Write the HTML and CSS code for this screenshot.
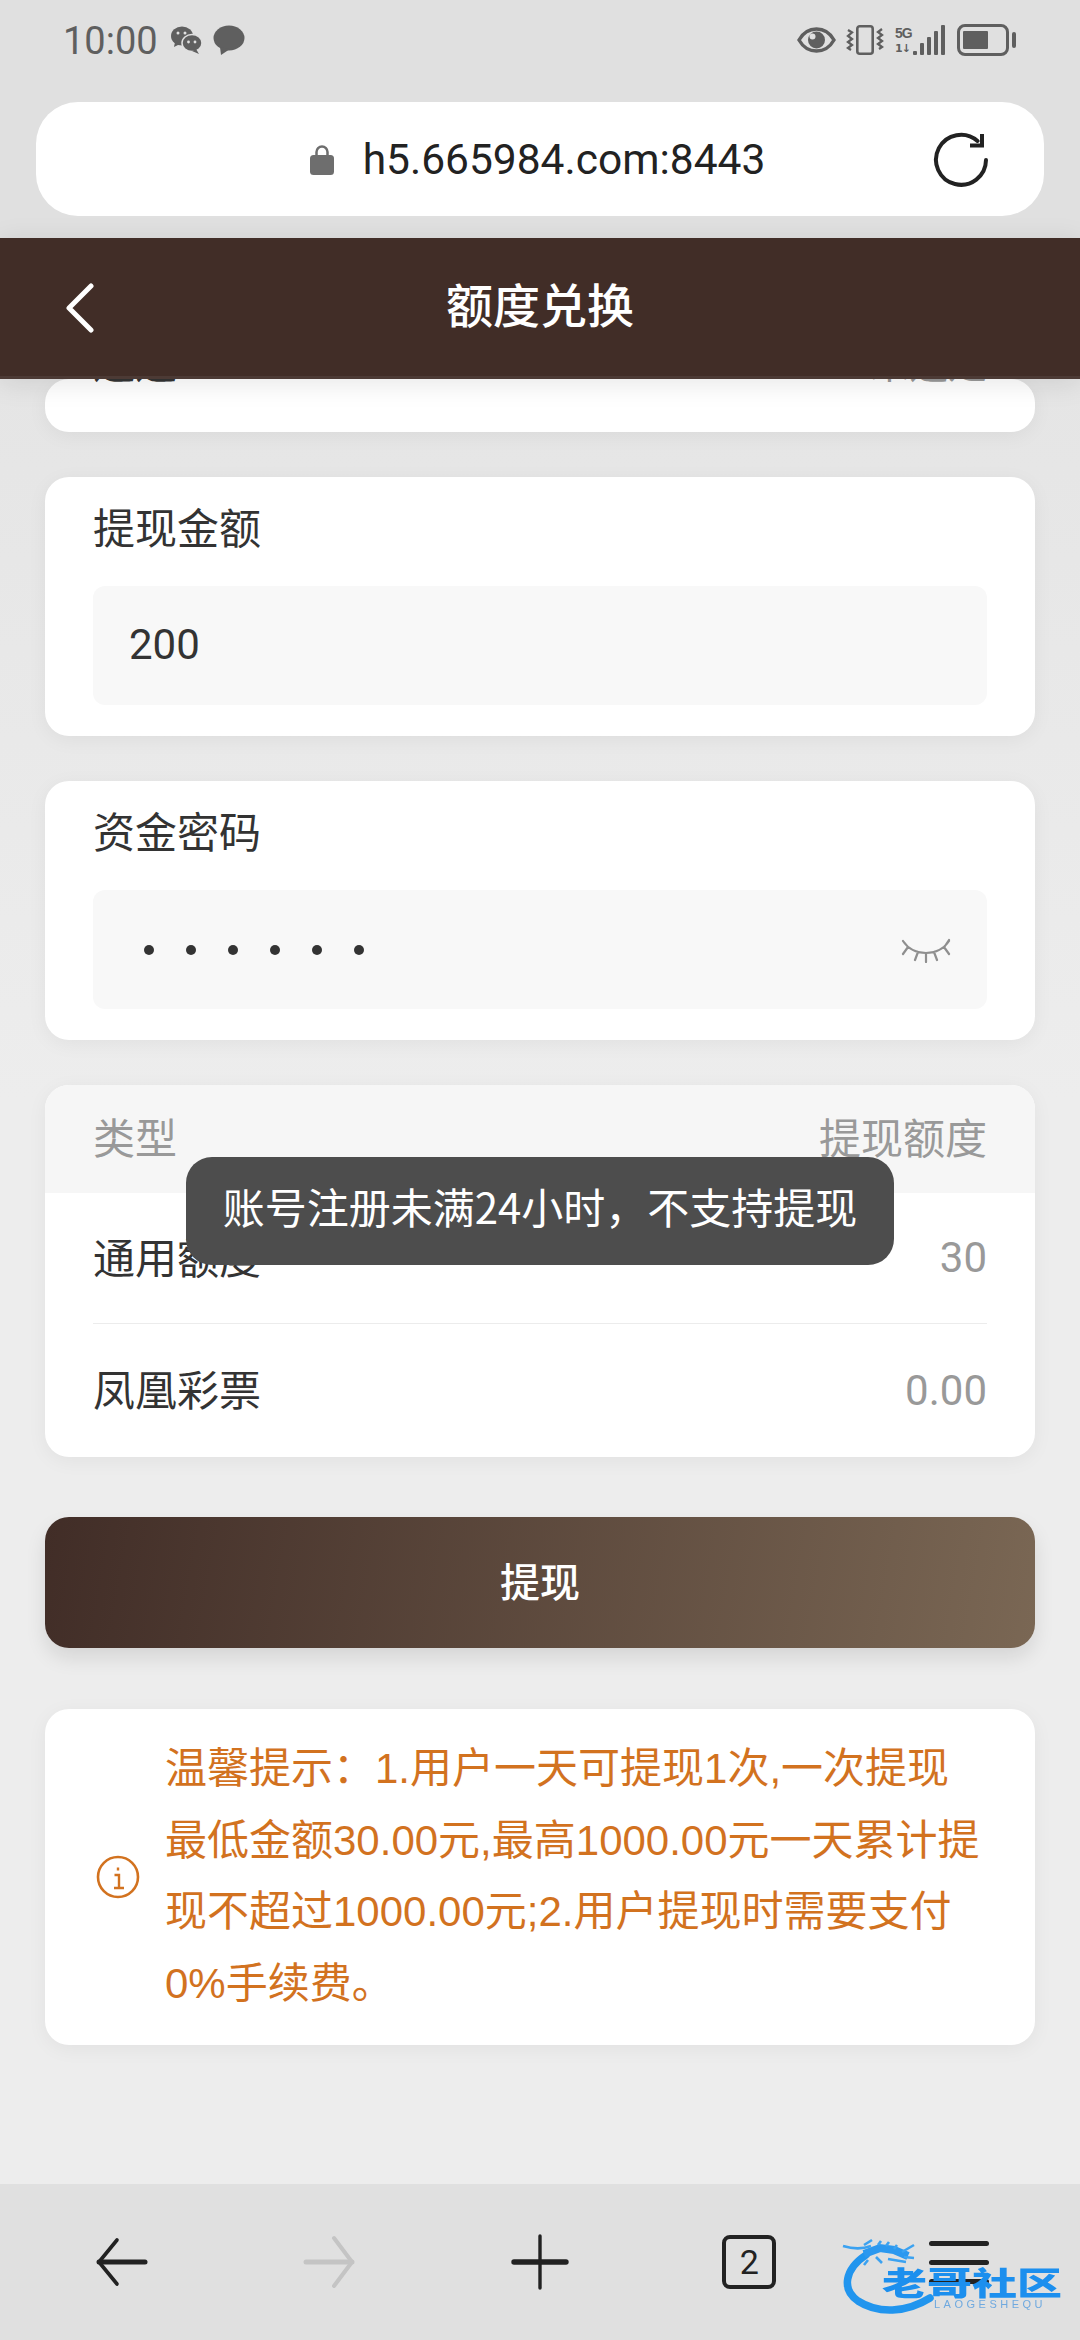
FILE: index.html
```html
<!DOCTYPE html>
<html lang="zh-CN">
<head>
<meta charset="utf-8">
<title>额度兑换</title>
<link rel="stylesheet" href="styles.css">
</head>
<body>
<div class="phone">
  <div class="status">
    <div class="status-left">
      <span class="time">10:00</span>
      <svg class="ic-wechat" viewBox="0 0 32 30"><ellipse cx="12" cy="11" rx="11" ry="9.500" fill="#5f5f5f"/><path d="M5 17l-1 5 6-3z" fill="#5f5f5f"/><ellipse cx="22" cy="18" rx="10" ry="8.500" fill="#5f5f5f" stroke="#e0e0e0" stroke-width="1.500"/><path d="M26 24l3 5-7-3z" fill="#5f5f5f"/><circle cx="8" cy="8" r="1.500" fill="#e0e0e0"/><circle cx="15" cy="8" r="1.500" fill="#e0e0e0"/><circle cx="18.500" cy="17" r="1.400" fill="#e0e0e0"/><circle cx="25" cy="17" r="1.400" fill="#e0e0e0"/></svg>
      <svg class="ic-msg" viewBox="0 0 32 30"><ellipse cx="16" cy="13" rx="15.500" ry="12.500" fill="#5f5f5f"/><path d="M7 22l1 8 9-6z" fill="#5f5f5f"/></svg>
    </div>
    <div class="status-right">
      <svg class="ic-eye" viewBox="0 0 39 26"><path d="M2 13C6.500 5 12.500 2 19.500 2S32.500 5 37 13c-4.500 8-10.500 11-17.500 11S6.500 21 2 13z" fill="none" stroke="#5f5f5f" stroke-width="3.400"/><circle cx="19.500" cy="13" r="8.500" fill="#5f5f5f"/><circle cx="15.500" cy="9.500" r="3" fill="#e0e0e0"/></svg>
      <svg class="ic-vib" viewBox="0 0 38 30"><rect x="11.300" y="1.300" width="15.400" height="27.400" rx="2.500" fill="none" stroke="#5f5f5f" stroke-width="2.600"/><path d="M2 5l4 2.500L2 11l4 3-4 3 4 3-4 3 3 2M36 4l-4 3 4 3-4 3 4 3-4 3 4 3-3 2" fill="none" stroke="#5f5f5f" stroke-width="2.300"/></svg>
      <div class="signal">
        <div class="net"><span class="net-g">5G</span><span class="net-a">1↓</span></div>
        <div class="bars"><i class="b1"></i><i class="b2"></i><i class="b3"></i><i class="b4"></i><i class="b5"></i></div>
      </div>
      <div class="battery"><div class="batt-body"><div class="batt-fill"></div></div><div class="batt-tip"></div></div>
    </div>
  </div>

  <div class="url-wrap">
    <div class="url-bar">
      <svg class="ic-lock" viewBox="0 0 24 31"><path d="M6.500 14V8a5.500 5.500 0 0 1 11 0v6" fill="none" stroke="#6e6e6e" stroke-width="2.500"/><rect x="0" y="11" width="24" height="20" rx="3.500" fill="#6e6e6e"/></svg>
      <span class="url">h5.665984.com:8443</span>
      <svg class="ic-reload" viewBox="0 0 56 56"><path d="M53 28A25 25 0 1 1 44.500 9" fill="none" stroke="#222" stroke-width="4" stroke-linecap="round"/><path d="M37 13.500H49V2" fill="none" stroke="#222" stroke-width="4"/></svg>
    </div>
  </div>

  <header class="app-bar">
    <svg class="ic-back" viewBox="0 0 30 50"><path d="M26 3L4 25l22 22" fill="none" stroke="#fff" stroke-width="5" stroke-linecap="round" stroke-linejoin="round"/></svg>
    <h1 class="title">额度兑换</h1>
  </header>

  <main class="content">
    <section class="card card-clip">
      <div class="clip-row"><span class="label">通道</span><span class="clip-val">未选定</span></div>
    </section>

    <section class="card form-card">
      <div class="label">提现金额</div>
      <div class="input"><span class="input-val">200</span></div>
    </section>

    <section class="card form-card">
      <div class="label">资金密码</div>
      <div class="input input-pass">
        <div class="dots"><i></i><i></i><i></i><i></i><i></i><i></i></div>
        <svg class="ic-eyeclosed" viewBox="0 0 50 26"><path d="M2 4c6 9 13 12 23 12s17-3 23-12M7 10L2 17M17 15l-3 8M25 16v9M33 15l3 8M43 10l5 7M44 9l4-6" fill="none" stroke="#8f8f8f" stroke-width="2.200" stroke-linecap="round"/></svg>
      </div>
    </section>

    <section class="card table-card">
      <div class="t-head"><span>类型</span><span>提现额度</span></div>
      <div class="t-row t-row-line"><span class="t-name">通用额度</span><span class="t-val">30</span></div>
      <div class="t-row t-row-last"><span class="t-name">凤凰彩票</span><span class="t-val">0.00</span></div>
    </section>

    <button class="submit">提现</button>

    <section class="card tip-card">
      <svg class="ic-info" viewBox="0 0 44 44"><circle cx="22" cy="22" r="20" fill="none" stroke="#d2721f" stroke-width="2.600"/><path d="M22 12.500v3M18.500 20H23v13M18 33h10" fill="none" stroke="#d2721f" stroke-width="2.400"/></svg>
      <p class="tip-text">温馨提示：1.用户一天可提现1次,一次提现最低金额30.00元,最高1000.00元一天累计提现不超过1000.00元;2.用户提现时需要支付0%手续费。</p>
    </section>

    <div class="toast">账号注册未满24小时，不支持提现</div>
  </main>

  <nav class="bottom-nav">
    <svg class="nav-ic" viewBox="0 0 60 60"><path d="M8 30h46" fill="none" stroke="#222" stroke-width="5" stroke-linecap="round"/><path d="M26 8L8 30l18 22" fill="none" stroke="#222" stroke-width="3.600" stroke-linecap="round" stroke-linejoin="round"/></svg>
    <svg class="nav-ic" viewBox="0 0 60 60"><path d="M6 30h46" fill="none" stroke="#c4c4c4" stroke-width="5" stroke-linecap="round"/><path d="M34 6l18 24-18 24" fill="none" stroke="#c4c4c4" stroke-width="4" stroke-linecap="round" stroke-linejoin="round"/></svg>
    <svg class="nav-ic" viewBox="0 0 60 60"><path d="M30 4v52" fill="none" stroke="#222" stroke-width="3.400" stroke-linecap="round"/><path d="M4 30h52" fill="none" stroke="#222" stroke-width="5.400" stroke-linecap="round"/></svg>
    <div class="tabs-ic">2</div>
    <div class="menu-ic"><i></i><i></i><i></i></div>
    <div class="watermark">
      <svg class="wm-art" viewBox="0 0 222 72"><path d="M24 12C3 26 -1 46 16 58c20 13 48 12 72-3" fill="none" stroke="#2195ee" stroke-width="7.500" stroke-linecap="round"/><path d="M22 11l16-6 14 2 14 6" fill="none" stroke="#2b98ef" stroke-width="8"/><path d="M1 3c10 3 20 3 28 0M22 2l8-5M36 2l3-4M44 3l3-4M52 6l3-4M60 9l12-7M62 14l10 1M46 16l18 3M34 14l6 6M26 17l-4 5" fill="none" stroke="#3ba2f1" stroke-width="2.600"/></svg>
      <div class="wm-name">老哥社区</div>
      <div class="wm-sub">LAOGESHEQU</div>
    </div>
  </nav>
</div>
</body>
</html>
```
FILE: styles.css
```css
* { box-sizing: border-box; }
html, body { margin: 0; padding: 0; }
body { width: 1080px; height: 2340px; overflow: hidden; font-family: "Noto Sans CJK SC", sans-serif; }
.phone { width: 1080px; height: 2340px; display: flex; flex-direction: column; background: #e0e0e0; }

.status { height: 102px; padding: 0 64px 22px 63px; display: flex; justify-content: space-between; align-items: center; }
.status-left, .status-right { display: flex; align-items: center; }
.time { font: 400 38px "Roboto", sans-serif; color: #5f5f5f; margin-right: 12px; padding-top: 2px; }
.ic-wechat { width: 32px; height: 30px; margin-right: 11px; }
.ic-msg { width: 32px; height: 30px; }
.ic-eye { width: 39px; height: 26px; margin-right: 10px; }
.ic-vib { width: 38px; height: 30px; margin-right: 11px; }
.signal { display: flex; align-items: flex-end; margin-right: 12px; }
.net { display: flex; flex-direction: column; width: 18px; color: #5f5f5f; }
.net-g { font: 700 14px/17px "Liberation Sans", sans-serif; letter-spacing: -1px; }
.net-a { font: 700 11px/13px "DejaVu Sans", sans-serif; letter-spacing: -1px; }
.bars { display: flex; align-items: flex-end; gap: 3px; height: 30px; }
.bars i { width: 4px; background: #5f5f5f; display: block; border-radius: 1px; }
.b1 { height: 4px; } .b2 { height: 12px; } .b3 { height: 18px; } .b4 { height: 24px; } .b5 { height: 30px; }
.battery { display: flex; align-items: center; }
.batt-body { width: 52px; height: 32px; border: 3px solid #5f5f5f; border-radius: 8px; padding: 4px 3px; }
.batt-fill { width: 25px; height: 100%; background: #5f5f5f; border-radius: 1px; }
.batt-tip { width: 4px; height: 16px; margin-left: 3px; background: #5f5f5f; border-radius: 2px; }

.url-wrap { height: 136px; padding: 0 36px; }
.url-bar { height: 114px; border-radius: 42px; background: #fff; position: relative; display: flex; align-items: center; justify-content: center; padding-right: 5px; gap: 29px; }
.ic-lock { width: 24px; height: 31px; }
.url { font: 400 42.500px "Roboto", sans-serif; color: #222; }
.ic-reload { width: 56px; height: 56px; position: absolute; left: 897px; top: 30px; }

.app-bar { height: 141px; background: #412d27; display: flex; align-items: center; justify-content: center; position: relative; z-index: 2; box-shadow: 0 4px 26px rgba(0,0,0,.10); border-bottom: 3px solid #4c3a35; padding-bottom: 10px; }
.ic-back { width: 30px; height: 50px; position: absolute; left: 65px; top: 45px; }
.title { margin: 0; font-size: 47px; font-weight: 500; color: #fff; }

.content { flex: 1; padding: 0 45px; background: linear-gradient(180deg, #e5e5e5 0%, #ededed 40%, #ededed 100%); overflow: hidden; position: relative; display: flex; flex-direction: column; }
.card { background: #fff; border-radius: 24px; box-shadow: 0 4px 20px rgba(0,0,0,.05); }
.card-clip { height: 53px; overflow: hidden; margin-bottom: 45px; flex: none; }
.clip-row { display: flex; justify-content: space-between; padding: 0 48px; margin-top: -33px; }
.clip-val { font-size: 39px; color: #999; line-height: 30px; }
.label { font-size: 42px; line-height: 30px; color: #333; }

.form-card { height: 259px; margin-bottom: 45px; padding: 34px 48px 0; flex: none; }
.input { height: 119px; margin-top: 45px; background: #f8f8f8; border-radius: 12px; display: flex; align-items: center; padding: 0 36px 2px; }
.input-val { font: 400 42px "Roboto", sans-serif; color: #333; }
.input-pass { justify-content: space-between; padding: 0 36px; }
.dots { display: flex; gap: 32px; padding-left: 15px; }
.dots i { width: 10px; height: 10px; background: #333; border-radius: 50%; display: block; }
.ic-eyeclosed { width: 50px; height: 26px; }

.table-card { height: 372px; overflow: hidden; margin-bottom: 60px; flex: none; }
.t-head { height: 108px; background: #f6f6f6; padding: 0 48px 8px; display: flex; justify-content: space-between; align-items: center; font-size: 42px; color: #999; }
.t-row { height: 131px; margin: 0 48px; padding-bottom: 6px; display: flex; justify-content: space-between; align-items: center; }
.t-row-last { height: 133px; }
.t-row-line { border-bottom: 1px solid #ececec; }
.t-name { font-size: 42px; color: #333; }
.t-val { font: 400 42px "Roboto", sans-serif; color: #999; padding-top: 5px; }

.submit { height: 131px; flex: none; border: 0; border-radius: 24px; background: linear-gradient(100deg, #412d27 0%, #7a6754 100%); color: #fff; font: 500 40px "Noto Sans CJK SC", sans-serif; box-shadow: 0 10px 20px rgba(0,0,0,.10); margin-bottom: 61px; padding: 0 0 6px; }

.tip-card { height: 336px; flex: none; display: flex; align-items: center; padding: 0 50px 0 51px; }
.ic-info { width: 44px; height: 44px; flex: none; margin-right: 25px; }
.tip-text { margin: -2px 0 0; font-size: 42px; line-height: 71.500px; color: #d2721f; font-family: "Liberation Sans", "Noto Sans CJK SC", sans-serif; }

.toast { position: absolute; left: 186px; top: 778px; width: 708px; height: 108px; background: #4d4d4d; border-radius: 26px; color: #fff; font-size: 42px; padding-bottom: 11px; display: flex; align-items: center; justify-content: center; z-index: 3; }

.bottom-nav { height: 156px; background: #e0e0e0; position: relative; display: grid; grid-template-columns: repeat(5, 209.500px); padding: 0 0 0 16px; align-items: center; justify-items: center; }
.nav-ic { width: 60px; height: 60px; }
.tabs-ic { width: 54px; height: 54px; border: 4px solid #222; border-radius: 8px; display: flex; align-items: center; justify-content: center; font: 400 34px "Roboto", sans-serif; color: #222; }
.menu-ic { display: flex; flex-direction: column; gap: 14px; }
.menu-ic i { display: block; width: 60px; height: 5px; background: #222; border-radius: 3px; }
.watermark { position: absolute; left: 842px; top: 59px; width: 222px; height: 72px; filter: blur(.6px); }
.wm-art { position: absolute; left: 0; top: 0; width: 222px; height: 72px; overflow: visible; }
.wm-name { position: absolute; left: 40px; top: 15px; width: 180px; font-size: 45px; line-height: 46px; font-weight: 900; color: #1c8fee; white-space: nowrap; transform: scaleY(.72); transform-origin: center; }
.wm-sub { position: absolute; left: 92px; top: 55px; font: 400 11px/12px "Liberation Sans", sans-serif; letter-spacing: 3.500px; color: #6fa9df; white-space: nowrap; }
```
